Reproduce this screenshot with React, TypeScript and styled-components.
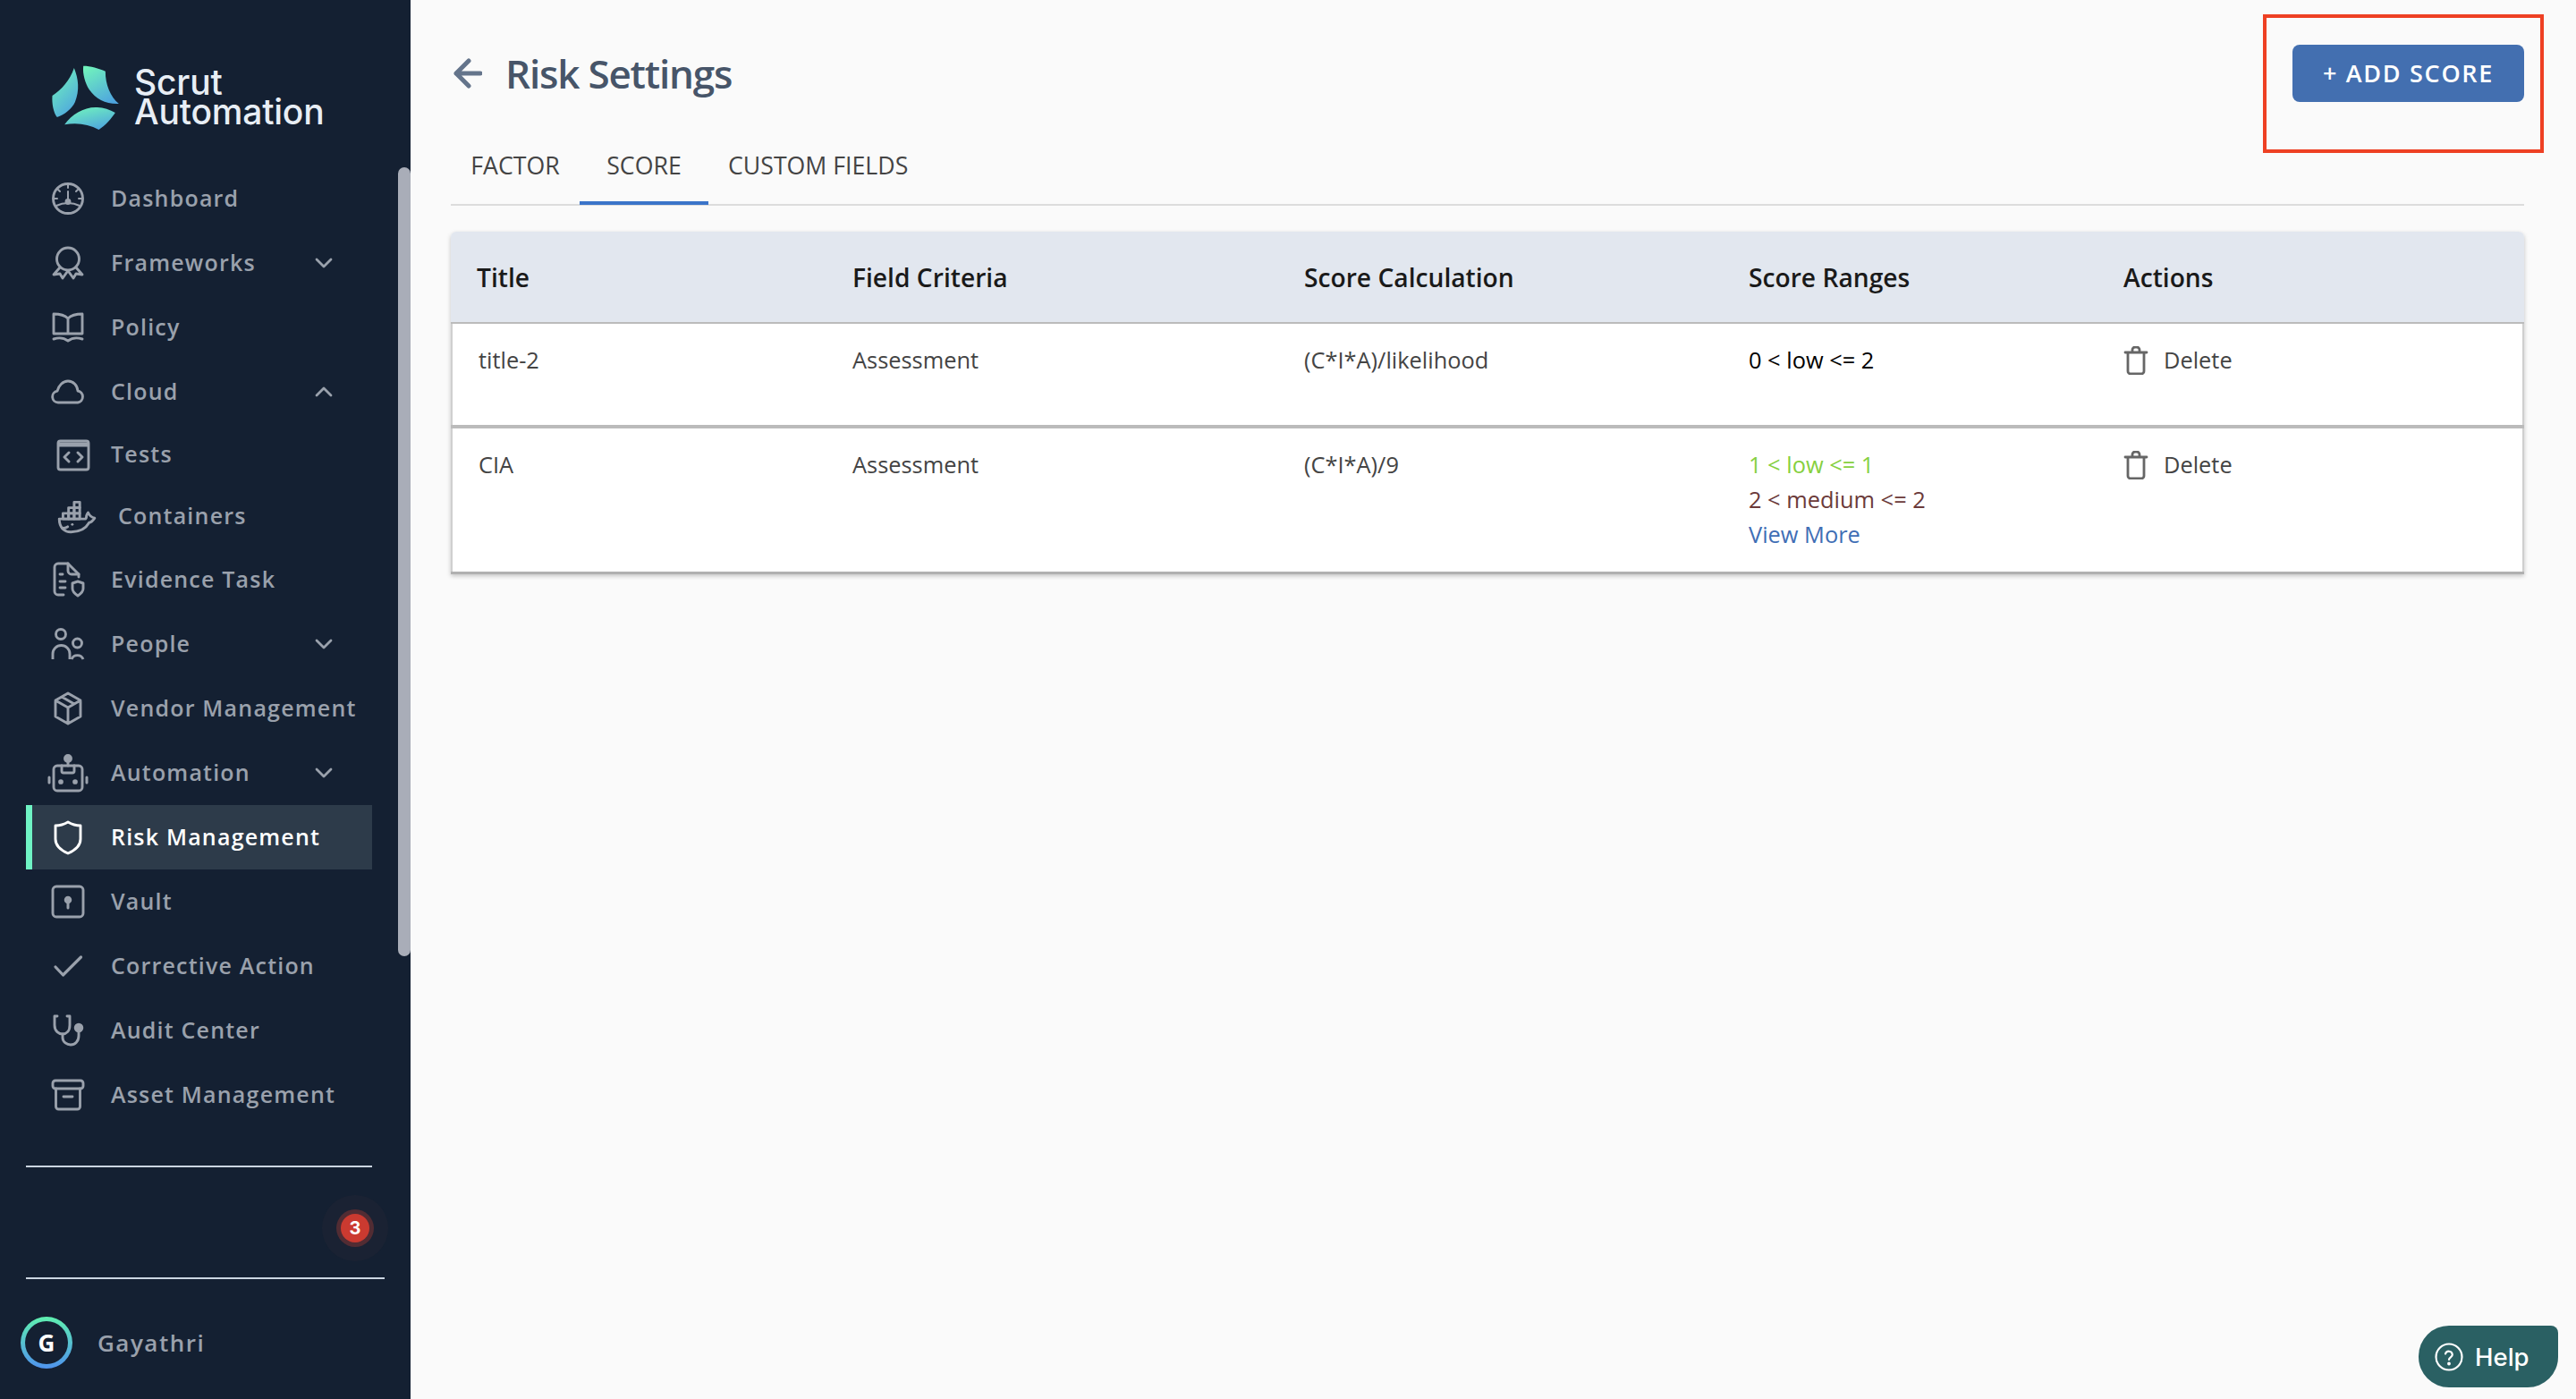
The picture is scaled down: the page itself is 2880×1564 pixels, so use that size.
import React from "react";
import styled, { createGlobalStyle } from "styled-components";
import { TbBrandDocker } from "react-icons/tb";

const Global = createGlobalStyle`
  html, body { margin: 0; padding: 0; background: #fafafa; }
  * { box-sizing: border-box; }
  #root { width: 2880px; height: 1564px; overflow: hidden; }
`;

const Page = styled.div`
  display: flex;
  width: 2880px;
  height: 1564px;
  font-family: "Open Sans", "Liberation Sans", sans-serif;
  background: #fafafa;
`;

const Sidebar = styled.aside`
  position: relative;
  flex: 0 0 459px;
  height: 100%;
  display: flex;
  flex-direction: column;
  background: #142032;
  color: #9aa1ac;
`;

const Scroll = styled.div`
  position: absolute;
  top: 187px;
  right: 0;
  width: 14px;
  height: 882px;
  border-radius: 7px;
  background: #a9adb8;
`;

const Brand = styled.div`
  flex: 0 0 186px;
  display: flex;
  align-items: center;
  padding: 30px 0 0 57px;
  gap: 16px;
`;

const BrandText = styled.div`
  font-family: Inter, "Liberation Sans", sans-serif;
  font-weight: 500;
  font-size: 39px;
  line-height: 33px;
  letter-spacing: -0.2px;
  color: #e8eef5;
`;

const Nav = styled.nav`
  flex: 0 0 auto;
  display: flex;
  flex-direction: column;
  width: 387px;
  margin-left: 29px;
`;

const NavRow = styled.div<{ $active?: boolean; $short?: boolean }>`
  display: flex;
  align-items: center;
  height: ${(p) => (p.$short ? 69 : 72)}px;
  font-size: 25px;
  font-weight: 600;
  letter-spacing: 1.2px;
  white-space: nowrap;
  color: ${(p) => (p.$active ? "#ffffff" : "#9aa1ac")};
  background: ${(p) => (p.$active ? "#2d3b4a" : "transparent")};
  border-left: 7px solid ${(p) => (p.$active ? "#6ff3c4" : "transparent")};
`;

const IconSlot = styled.span<{ $shift?: number; $textShift?: number }>`
  flex: 0 0 48px;
  display: flex;
  align-items: center;
  justify-content: center;
  margin-left: ${(p) => 16 + (p.$shift ?? 0)}px;
  margin-right: ${(p) => 24 - (p.$shift ?? 0) + (p.$textShift ?? 0)}px;
`;

const Label = styled.span`
  flex: 1;
  padding-bottom: 3px;
`;

const Chevron = styled.svg`
  flex: 0 0 20px;
  margin-right: 44px;
  fill: none;
  stroke: currentColor;
  stroke-width: 2.8;
  stroke-linecap: round;
  stroke-linejoin: round;
`;

const Line = styled.svg`
  display: block;
  fill: none;
  stroke: currentColor;
  stroke-width: 2.9;
  stroke-linecap: round;
  stroke-linejoin: round;
`;

const BackArrow = styled.svg`
  display: block;
  fill: none;
  stroke: currentColor;
  stroke-width: 5;
  stroke-linecap: round;
  stroke-linejoin: round;
`;

const Rule = styled.hr<{ $width: number; $top?: number }>`
  flex: 0 0 2px;
  width: ${(p) => p.$width}px;
  height: 2px;
  margin: ${(p) => p.$top ?? 0}px 0 0 29px;
  border: 0;
  background: #cbd5e1;
`;

const AlertRow = styled.div`
  flex: 0 0 123px;
  display: flex;
  justify-content: flex-end;
  align-items: center;
  padding: 13px 46px 0 0;
`;

const Badge = styled.span`
  display: flex;
  align-items: center;
  justify-content: center;
  width: 32px;
  height: 32px;
  border-radius: 50%;
  background: #cb3a30;
  color: #fff;
  font-family: Inter, "Liberation Sans", sans-serif;
  font-size: 20px;
  font-weight: 700;
  box-shadow: 0 0 0 5px #522c33, 0 0 0 21px #1a2233;
`;

const UserRow = styled.div`
  flex: 1;
  display: flex;
  align-items: center;
  padding: 8px 0 0 23px;
  gap: 28px;
  font-size: 26px;
  font-weight: 600;
  letter-spacing: 1.5px;
`;

const Avatar = styled.div`
  display: flex;
  align-items: center;
  justify-content: center;
  width: 58px;
  height: 58px;
  border-radius: 50%;
  background: linear-gradient(180deg, #5ff0b0 0%, #4f93ee 100%);
`;

const AvatarInner = styled.div`
  display: flex;
  align-items: center;
  justify-content: center;
  width: 48px;
  height: 48px;
  border-radius: 50%;
  background: #142032;
  color: #fff;
  font-size: 26px;
  font-weight: 700;
  letter-spacing: 0;
`;

const Main = styled.main`
  position: relative;
  flex: 1;
  min-width: 0;
  padding: 50px 58px 0 45px;
`;

const Head = styled.header`
  display: flex;
  align-items: center;
  justify-content: space-between;
  height: 64px;
`;

const TitleWrap = styled.div`
  display: flex;
  align-items: center;
  gap: 26px;
  padding-left: 3px;
  color: #64748b;
`;

const Title = styled.h1`
  margin: 0;
  font-size: 44px;
  font-weight: 600;
  letter-spacing: -1.2px;
  color: #475569;
`;

const AddButton = styled.button`
  width: 259px;
  height: 64px;
  padding: 0 0 2px;
  border: 0;
  border-radius: 8px;
  background: #436fb0;
  color: #fff;
  font-family: inherit;
  font-size: 27px;
  font-weight: 600;
  letter-spacing: 1.7px;
`;

const Callout = styled.div`
  position: absolute;
  left: 2071px;
  top: 16px;
  width: 314px;
  height: 155px;
  border: 4px solid #ee4023;
`;

const Tabs = styled.div`
  display: flex;
  margin-top: 30px;
  border-bottom: 2px solid #dcdcdc;
`;

const Tab = styled.div<{ $active?: boolean }>`
  display: flex;
  align-items: center;
  justify-content: center;
  min-width: 144px;
  height: 85px;
  padding: 0 22px;
  margin-bottom: -1px;
  font-size: 26.7px;
  color: #444;
  border-bottom: 4px solid ${(p) => (p.$active ? "#3b74c9" : "transparent")};
`;

const Table = styled.section`
  margin-top: 29px;
  border-radius: 6px 6px 0 0;
  box-shadow: 0 2px 5px rgba(0, 0, 0, 0.22);
`;

const Columns = "449px 505px 497px 419px 1fr";

const HeaderRow = styled.div`
  display: grid;
  grid-template-columns: ${Columns};
  align-items: center;
  height: 101px;
  border-radius: 6px 6px 0 0;
  background: #e2e7ef;
  font-size: 28.2px;
  font-weight: 600;
  color: #1a1a1a;
`;

const HeaderCell = styled.div<{ $first?: boolean }>`
  padding-left: ${(p) => (p.$first ? 29 : 0)}px;
`;

const BodyRow = styled.div<{ $height: number; $topWidth: number }>`
  display: grid;
  grid-template-columns: ${Columns};
  height: ${(p) => p.$height}px;
  padding-top: 21px;
  background: #fff;
  border-top: ${(p) => p.$topWidth}px solid #bbbbbb;
  font-size: 25.4px;
  line-height: 39px;
  color: #444;
  box-shadow: inset 2px 0 0 #cfcfcf, inset -2px 0 0 #cfcfcf;
`;

const BodyEnd = styled.div`
  height: 3px;
  background: #b0b0b0;
`;

const Cell = styled.div<{ $first?: boolean }>`
  padding-left: ${(p) => (p.$first ? 31 : 0)}px;
`;

const Range = styled.div<{ $tone: string }>`
  color: ${(p) => p.$tone};
`;

const Action = styled.div`
  display: flex;
  align-items: center;
  gap: 17px;
  height: 39px;
  color: #444;
`;

const TrashIcon = styled.svg`
  flex: 0 0 28px;
  fill: none;
  stroke: #666;
  stroke-width: 2.8;
  stroke-linecap: round;
  stroke-linejoin: round;
`;

const Help = styled.div`
  position: absolute;
  right: 20px;
  bottom: 13px;
  display: flex;
  align-items: center;
  gap: 13px;
  width: 156px;
  height: 69px;
  padding-left: 18px;
  border-radius: 34px 8px 34px 34px;
  background: #2a6063;
  color: #fff;
  font-family: Inter, "Liberation Sans", sans-serif;
  font-size: 27.5px;
  font-weight: 500;
`;

const HelpIcon = styled.svg`
  flex: 0 0 32px;
  fill: none;
  stroke: #fff;
  stroke-width: 2.2;
  stroke-linecap: round;
  stroke-linejoin: round;
`;

const Logo = () => (
  <svg width="77" height="75" viewBox="170 210 230 225">
    <defs>
      <linearGradient id="lg" x1="0.2" y1="0" x2="0.75" y2="1">
        <stop offset="0" stopColor="#70f2bd" />
        <stop offset="1" stopColor="#4ea4df" />
      </linearGradient>
    </defs>
    <g fill="url(#lg)">
      <path d="M247 225 C262 262 266 300 250 340 C240 362 215 382 190 390 C178 375 172 345 174 318 C205 297 232 268 247 225 Z" />
      <path d="M278 218 C302 218 330 226 352 236 C352 280 368 320 397 345 C355 347 320 330 298 298 C284 275 275 245 278 218 Z" />
      <path d="M215 415 C240 380 280 355 325 357 C345 358 368 365 385 375 C372 395 352 418 330 432 C295 413 255 407 215 415 Z" />
    </g>
  </svg>
);

const Ico = ({ size = 40, children }: { size?: number; children: React.ReactNode }) => (
  <Line width={size} height={size} viewBox={`0 0 ${size} ${size}`}>
    {children}
  </Line>
);

const DashboardIcon = () => (
  <Ico>
    <circle cx="20" cy="20" r="16.5" />
    <path d="M20 4v4M9 10l2 2M31 10l-2 2M4 20h4M36 20h-4M20 12v9" strokeWidth="2" />
    <circle cx="20" cy="23.5" r="2" fill="currentColor" />
    <path d="M7 28c4-2 8-3 13-3s9 1 13 3" strokeWidth="2" />
  </Ico>
);
const AwardIcon = () => (
  <Ico>
    <circle cx="20" cy="15.5" r="12.5" />
    <path d="M11 25L4 33l7-1 3 5 5-7M29 25l7 8-7-1-3 5-5-7" />
  </Ico>
);
const BookIcon = () => (
  <Ico>
    <path d="M4 5c6 0 12 1 16 5 4-4 10-5 16-5v22H4zM20 10v17" />
    <path d="M4 33c6-2 12-1 16 2 4-3 10-4 16-2" />
  </Ico>
);
const CloudIcon = () => (
  <Ico>
    <path d="M9 32a6.5 6.5 0 0 1-1-12.9C9.5 13 14.5 8 20 8c6 0 10.5 5 11 11a6.6 6.6 0 0 1 0 13z" />
  </Ico>
);
const TestsIcon = () => (
  <Ico>
    <rect x="3" y="4" width="34" height="32" rx="2.5" />
    <path d="M3 8h34" strokeWidth="5" strokeLinecap="butt" />
    <path d="M15 17l-5 5 5 5M25 17l5 5-5 5" />
  </Ico>
);
const EvidenceIcon = () => (
  <Ico>
    <path d="M15 37H9a4 4 0 0 1-4-4V6a4 4 0 0 1 4-4h11l12 12v3" />
    <path d="M20 2v8a4 4 0 0 0 4 4h8M11 14h3M11 22h6M11 29h6" />
    <path d="M31 22l6 2v6c0 4-3 6-6 8-3-2-6-4-6-8v-6z" />
  </Ico>
);
const PeopleIcon = () => (
  <Ico>
    <circle cx="12" cy="9" r="5.5" />
    <path d="M3 37v-6a9.5 9.5 0 0 1 19 0v6" strokeLinecap="butt" />
    <circle cx="30.5" cy="19" r="5" />
    <path d="M24 37a7 7 0 0 1 13 0" strokeLinecap="butt" />
  </Ico>
);
const PackageIcon = () => (
  <Ico>
    <path d="M20 3l14 8v18l-14 8-14-8V11zM6 11l14 8 14-8M20 19v18M13 7l14 8" />
  </Ico>
);
const RobotIcon = () => (
  <Ico size={48}>
    <rect x="8" y="16" width="32" height="28" rx="4" />
    <path d="M17 16v6a2 2 0 0 0 2 2h10a2 2 0 0 0 2-2v-6M24 11v5" />
    <circle cx="24" cy="8" r="3.5" fill="currentColor" />
    <circle cx="16" cy="34" r="1.4" fill="currentColor" />
    <circle cx="32" cy="34" r="1.4" fill="currentColor" />
    <path d="M3 29v6M45 29v6" strokeWidth="3" />
  </Ico>
);
const ShieldIcon = () => (
  <Ico>
    <path d="M20 3c5 3 10 4 14 4v15c0 8-7 13-14 16-7-3-14-8-14-16V7c4 0 9-1 14-4z" />
  </Ico>
);
const VaultIcon = () => (
  <Ico>
    <rect x="3" y="3" width="34" height="34" rx="4" />
    <circle cx="20" cy="18" r="2.8" fill="currentColor" />
    <path d="M20 18v9" strokeWidth="3" />
  </Ico>
);
const CheckIcon = () => (
  <Ico>
    <path d="M6 21l8.5 9L34.5 10" strokeWidth="3.2" />
  </Ico>
);
const StethIcon = () => (
  <Ico>
    <path d="M8 4H5v10c0 7 5 10 9 10s8-3 8-10V4h-3" />
    <path d="M14 24v4c0 5 5 8 9 8 5 0 9-4 9-10v-6" />
    <circle cx="32" cy="17" r="3.8" fill="currentColor" />
  </Ico>
);
const ArchiveIcon = () => (
  <Ico>
    <rect x="3" y="4" width="34" height="9" rx="3" />
    <path d="M6.5 13v20a3 3 0 0 0 3 3h21a3 3 0 0 0 3-3V13M15 22h10" />
  </Ico>
);

const Down = () => (
  <Chevron width="20" height="20" viewBox="0 0 20 20">
    <path d="M2 6l8 8 8-8" />
  </Chevron>
);
const Up = () => (
  <Chevron width="20" height="20" viewBox="0 0 20 20">
    <path d="M2 14l8-8 8 8" />
  </Chevron>
);

type Item = {
  label: string;
  icon: React.ReactNode;
  chevron?: "up" | "down";
  short?: boolean;
  active?: boolean;
  shift?: number;
  textShift?: number;
};

const items: Item[] = [
  { label: "Dashboard", icon: <DashboardIcon /> },
  { label: "Frameworks", icon: <AwardIcon />, chevron: "down" },
  { label: "Policy", icon: <BookIcon /> },
  { label: "Cloud", icon: <CloudIcon />, chevron: "up" },
  { label: "Tests", icon: <TestsIcon />, short: true, shift: 6 },
  { label: "Containers", icon: <TbBrandDocker size={50} strokeWidth={1.4} />, short: true, shift: 8, textShift: 6 },
  { label: "Evidence Task", icon: <EvidenceIcon /> },
  { label: "People", icon: <PeopleIcon />, chevron: "down" },
  { label: "Vendor Management", icon: <PackageIcon /> },
  { label: "Automation", icon: <RobotIcon />, chevron: "down" },
  { label: "Risk Management", icon: <ShieldIcon />, active: true },
  { label: "Vault", icon: <VaultIcon /> },
  { label: "Corrective Action", icon: <CheckIcon /> },
  { label: "Audit Center", icon: <StethIcon /> },
  { label: "Asset Management", icon: <ArchiveIcon /> },
];

const Trash = () => (
  <TrashIcon width="28" height="32" viewBox="0 0 28 32">
    <path d="M2 7h24M5 7v21a3 3 0 0 0 3 3h12a3 3 0 0 0 3-3V7M10 7V4a3 3 0 0 1 3-3h2a3 3 0 0 1 3 3v3" />
  </TrashIcon>
);

export default function App() {
  return (
    <Page>
      <Global />
      <Sidebar>
        <Brand>
          <Logo />
          <BrandText>
            Scrut
            <br />
            Automation
          </BrandText>
        </Brand>
        <Nav>
          {items.map((it) => (
            <NavRow key={it.label} $active={it.active} $short={it.short}>
              <IconSlot $shift={it.shift} $textShift={it.textShift}>{it.icon}</IconSlot>
              <Label>{it.label}</Label>
              {it.chevron === "down" && <Down />}
              {it.chevron === "up" && <Up />}
            </NavRow>
          ))}
        </Nav>
        <Rule $width={387} $top={43} />
        <AlertRow>
          <Badge>3</Badge>
        </AlertRow>
        <Rule $width={401} />
        <UserRow>
          <Avatar>
            <AvatarInner>G</AvatarInner>
          </Avatar>
          Gayathri
        </UserRow>
        <Scroll />
      </Sidebar>
      <Main>
        <Head>
          <TitleWrap>
            <BackArrow width="32" height="34" viewBox="0 0 32 34">
              <path d="M3 17h27M17 3L3 17l14 14" />
            </BackArrow>
            <Title>Risk Settings</Title>
          </TitleWrap>
          <AddButton>+ ADD SCORE</AddButton>
        </Head>
        <Tabs>
          <Tab>FACTOR</Tab>
          <Tab $active>SCORE</Tab>
          <Tab>CUSTOM FIELDS</Tab>
        </Tabs>
        <Table>
          <HeaderRow>
            <HeaderCell $first>Title</HeaderCell>
            <HeaderCell>Field Criteria</HeaderCell>
            <HeaderCell>Score Calculation</HeaderCell>
            <HeaderCell>Score Ranges</HeaderCell>
            <HeaderCell>Actions</HeaderCell>
          </HeaderRow>
          <BodyRow $height={115} $topWidth={2}>
            <Cell $first>title-2</Cell>
            <Cell>Assessment</Cell>
            <Cell>(C*I*A)/likelihood</Cell>
            <Cell>
              <Range $tone="#000000">0 &lt; low &lt;= 2</Range>
            </Cell>
            <Cell>
              <Action>
                <Trash />
                Delete
              </Action>
            </Cell>
          </BodyRow>
          <BodyRow $height={164} $topWidth={4}>
            <Cell $first>CIA</Cell>
            <Cell>Assessment</Cell>
            <Cell>(C*I*A)/9</Cell>
            <Cell>
              <Range $tone="#86d03f">1 &lt; low &lt;= 1</Range>
              <Range $tone="#6b3a3a">2 &lt; medium &lt;= 2</Range>
              <Range $tone="#3f6eb5">View More</Range>
            </Cell>
            <Cell>
              <Action>
                <Trash />
                Delete
              </Action>
            </Cell>
          </BodyRow>
          <BodyEnd />
        </Table>
        <Callout />
        <Help>
          <HelpIcon width="32" height="32" viewBox="0 0 32 32">
            <circle cx="16" cy="16" r="14.5" />
            <path d="M12 12.5a4 4 0 0 1 7.8 1c0 2.6-3.8 3-3.8 5.5" />
            <circle cx="16" cy="23.5" r="0.8" fill="#fff" />
          </HelpIcon>
          Help
        </Help>
      </Main>
    </Page>
  );
}
